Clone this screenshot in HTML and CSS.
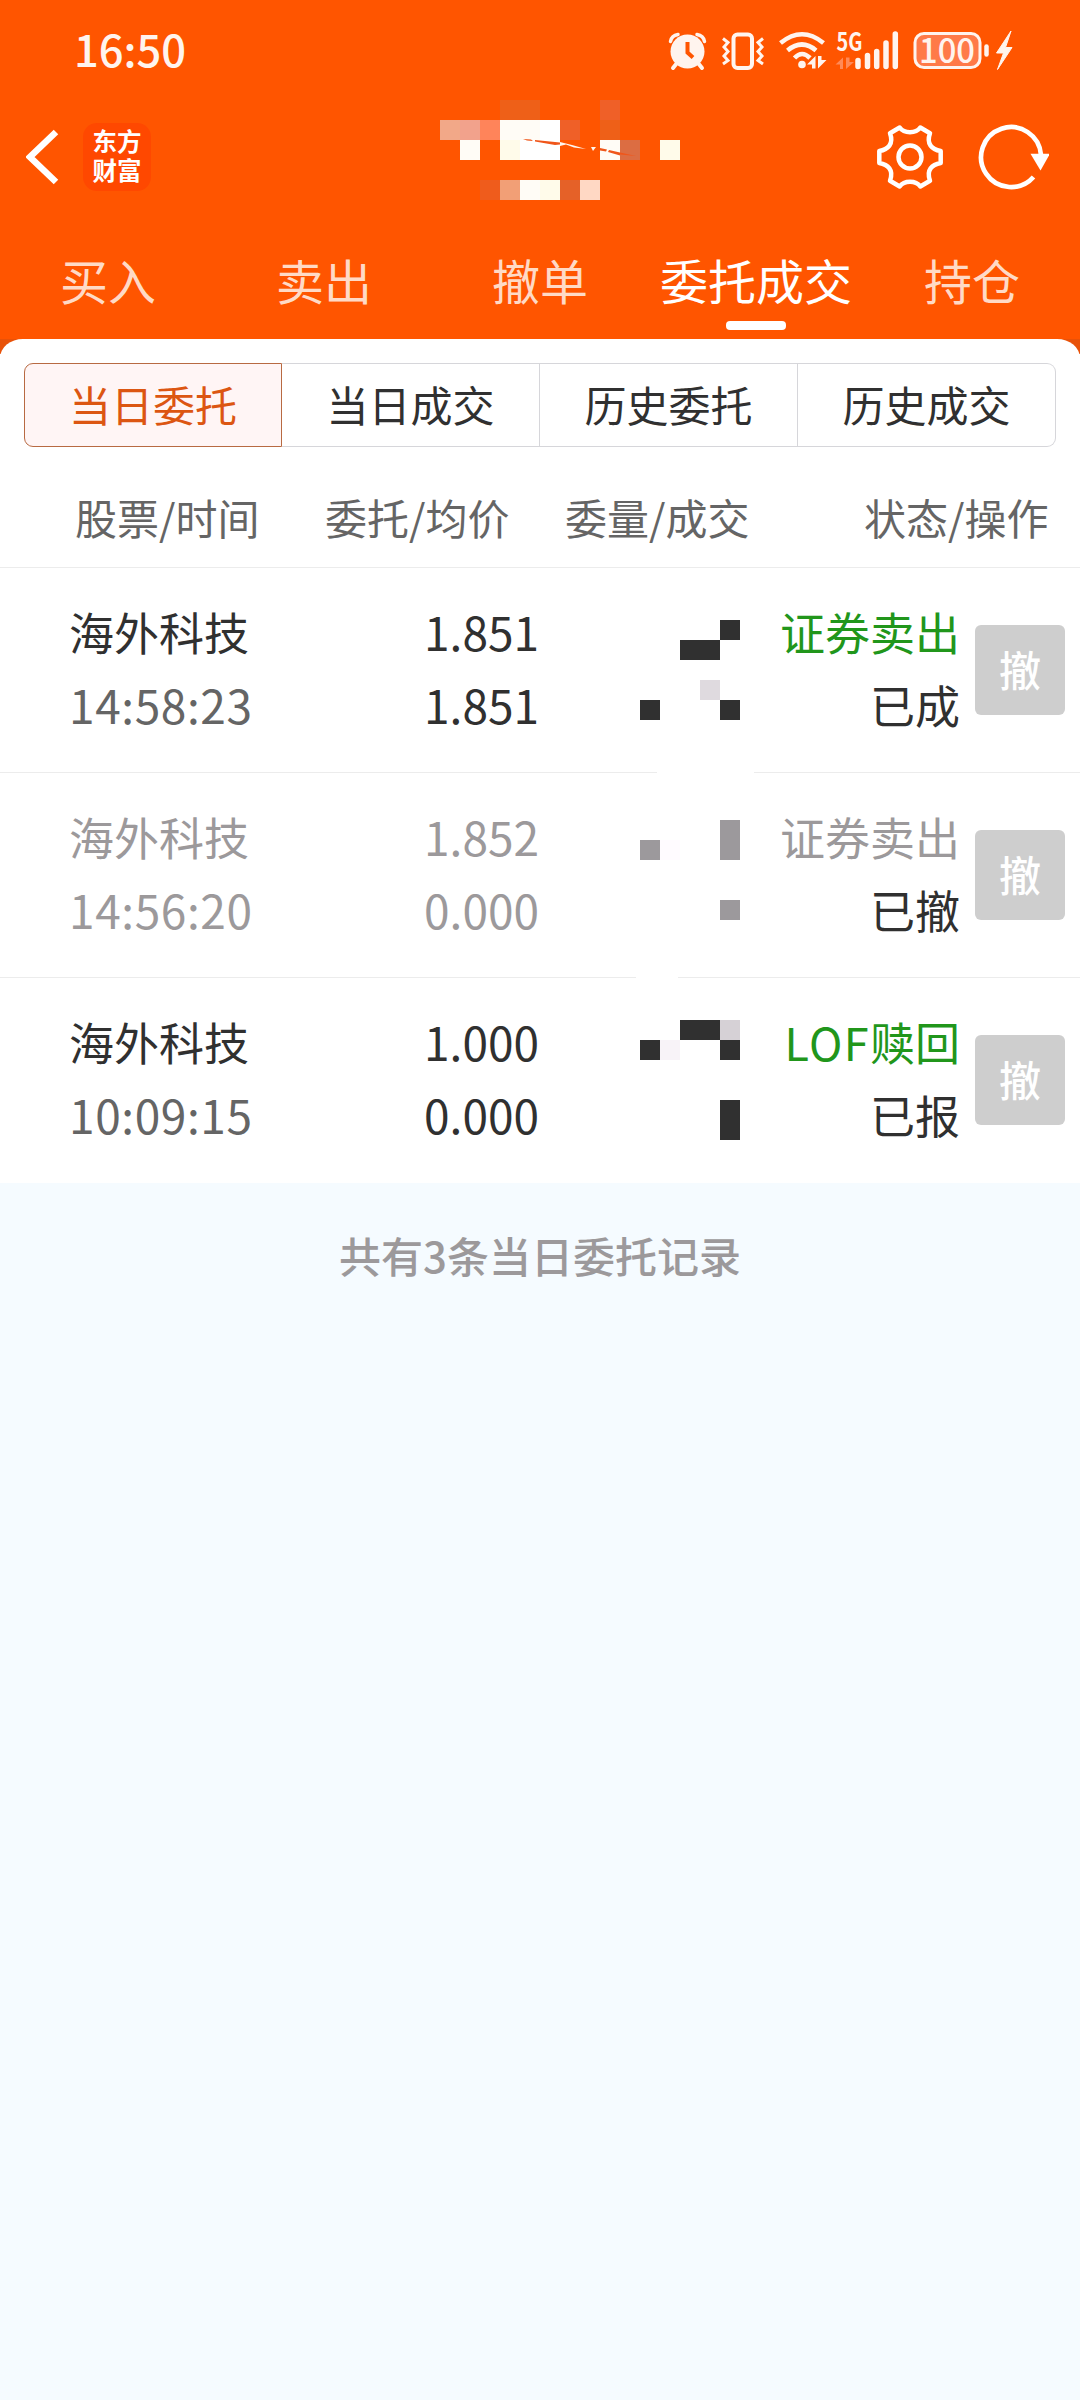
FILE: index.html
```html
<!DOCTYPE html>
<html lang="zh-CN">
<head>
<meta charset="utf-8">
<title>委托成交</title>
<link rel="stylesheet" href="styles.css">
</head>
<body>
<header class="top">
  <div class="status-bar">
    <span class="clock">16:50</span>
    <svg class="status-icons" width="360" height="60" viewBox="660 20 360 60" fill="none" stroke="#fff4ee">
      <!-- alarm -->
      <circle cx="687.500" cy="51.500" r="17" fill="#fff4ee" stroke="none"/>
      <path d="M670.500 41.500q1-6 7.500-7M704.500 41.500q-1-6-7.500-7" stroke-width="3.500" stroke-linecap="round"/>
      <path d="M677 63l-4 5M698 63l4 5" stroke-width="4" stroke-linecap="round"/>
      <path d="M687.500 42v10.500l5.500 5" stroke="#ff5500" stroke-width="4"/>
      <!-- vibrate -->
      <rect x="733.500" y="34.500" width="18.500" height="33.500" rx="4" stroke-width="4"/>
      <path d="M723 38.500l5 4-4 4.500 4 4.500-4 4.500 4 4.500-5 3.500M763 38.500l-5 4 4 4.500-4 4.500 4 4.500-4 4.500 5 3.500" stroke-width="3"/>
      <!-- wifi -->
      <path d="M780.500 43Q802 25.500 823.500 43M787.500 50.500Q802 38.500 816 50.500" stroke-width="4.600"/>
      <path d="M794.500 58Q802 50 810 58" stroke-width="4.600"/>
      <circle cx="802" cy="64.500" r="3.800" fill="#fff4ee" stroke="none"/>
      <path d="M807 64.500l8.500-8.500V68.500h-3.500v-4zM818 56v12.500l8.500-8.500h-5v-4z" fill="#fff4ee" stroke="none"/>
      <!-- mobile signal -->
      <text class="net" x="836.500" y="51" textLength="26" lengthAdjust="spacingAndGlyphs">5G</text>
      <path d="M835.500 64.500l7.500-7V69h-3v-4.500zM846 57.500V69l8-7h-4.500v-4.500z" fill="#ff8a58" stroke="none"/>
      <path d="M858 60.500v6M867.500 55.500v11M876.700 51.500v15M886 43v23.500M895.300 34v32.500" stroke-width="5.500" stroke-linecap="round"/>
      <!-- battery -->
      <rect x="915" y="33.500" width="65" height="34" rx="9" fill="#ff7a48" stroke-width="3"/>
      <path d="M986.500 46.500v8" stroke-width="4.500" stroke-linecap="round"/>
      <text class="level" x="919" y="63" textLength="56" lengthAdjust="spacingAndGlyphs">100</text>
      <path d="M1011 31l-14.500 22h7l-6 16.500 14.500-22h-6.500z" fill="#fff4ee" stroke="#fff4ee" stroke-width="1"/>
    </svg>
  </div>

  <div class="nav-bar">
    <svg class="back" width="34" height="56" viewBox="0 0 34 56" fill="none" stroke="#fff" stroke-width="6.500"><path d="M30 3L4 28 30 53"/></svg>
    <div class="logo"><span>东方</span><span>财富</span></div>
    <svg class="account" width="240" height="100" viewBox="440 100 240 100" shape-rendering="crispEdges">
      <path fill="#ee6018" d="M500 100h40v20h-40zM600 120h20v20h-20z"/>
      <path fill="#ef6028" d="M600 100h20v20h-20zM560 120h20v20h-20z"/>
      <path fill="#f2a888" d="M440 120h20v20h-20z"/>
      <path fill="#f2a28c" d="M460 120h20v20h-20z"/>
      <path fill="#ff845a" d="M480 120h20v20h-20z"/>
      <path fill="#fffcf6" d="M500 120h40v20h-40zM460 140h20v20h-20zM600 140h20v20h-20zM520 180h20v20h-20z"/>
      <path fill="#fff" d="M540 120h20v20h-20zM520 140h40v20h-40z"/>
      <path fill="#fffbea" d="M500 140h20v20h-20zM660 140h20v20h-20zM540 180h20v20h-20z"/>
      <path fill="#dc6d42" d="M620 140h20v20h-20z"/>
      <path fill="#ef5c1c" d="M480 180h20v20h-20z"/>
      <path fill="#f29f76" d="M500 180h20v20h-20z"/>
      <path fill="#e56128" d="M560 180h20v20h-20z"/>
      <path fill="#ffd8c4" d="M580 180h20v20h-20z"/>
      <g shape-rendering="auto">
        <path fill="#f0561a" d="M523 139l8 .5 2 1.500-6-.5zM535 140l25 2.500v2l-5 .5-20-3.500zM609 150l11 2.500v3l-12-3.500zM600 148l7 1.500-1 2-6-1z"/>
        <path fill="#fff6ee" d="M560 142l12 3 14 4-12-1.500-8-3-6 1.500zM591 147h5l-3 4z"/>
        <path fill="#f0561a" d="M620 152.500l16 3.500-16-1.500z"/>
      </g>
    </svg>
    <svg class="gear" width="68" height="68" viewBox="-34 -34 68 68" fill="none" stroke="#fff" stroke-width="4.500" stroke-linejoin="round">
      <path d="M-10.300-29.500Q-7-24.800 0-24.800T10.300-29.500L20-23.800C16-13 22-7.500 30.700-6V6C22 7.500 16 13 20 23.800L10.300 29.500Q7 24.800 0 24.800T-10.300 29.500L-20 23.800C-16 13-22 7.500-30.700 6V-6C-22-7.500-16-13-20-23.800Z"/>
      <circle r="11.500"/>
    </svg>
    <svg class="refresh" width="72" height="68" viewBox="-34 -34 72 68" fill="none" stroke="#fff" stroke-width="4.700">
      <path d="M30-2A30 30 0 1 0 22.500 20"/>
      <path d="M19.500-3.300h19.500L29.500 13.500z" fill="#fff" stroke="none"/>
    </svg>
  </div>

  <nav class="tabs">
    <a class="tab">买入</a>
    <a class="tab">卖出</a>
    <a class="tab">撤单</a>
    <a class="tab active">委托成交</a>
    <a class="tab">持仓</a>
  </nav>
</header>

<div class="sheet-wrap">
<main class="sheet">
  <div class="segments">
    <a class="segment selected">当日委托</a>
    <a class="segment">当日成交</a>
    <a class="segment">历史委托</a>
    <a class="segment">历史成交</a>
  </div>
  <div class="columns">
    <span>股票/时间</span><span>委托/均价</span><span>委量/成交</span><span>状态/操作</span>
  </div>

  <section class="order">
    <div class="stock"><p>海外科技</p><p class="time">14:58:23</p></div>
    <div class="price"><p>1.851</p><p>1.851</p></div>
    <svg class="amount" width="120" height="205" viewBox="636 568 120 205" shape-rendering="crispEdges">
      <path fill="#fff" d="M657 770h97v3h-97z"/>
      <path fill="#303030" d="M720 620h20v20h-20zM680 640h40v20h-40zM640 700h20v20h-20zM720 700h20v20h-20z"/>
      <path fill="#dfdadf" d="M700 680h20v20h-20z"/>
    </svg>
    <div class="state"><p class="sell">证券卖出</p><p>已成</p></div>
    <button class="cancel">撤</button>
  </section>

  <section class="order withdrawn">
    <div class="stock"><p>海外科技</p><p class="time">14:56:20</p></div>
    <div class="price"><p>1.852</p><p>0.000</p></div>
    <svg class="amount" width="120" height="205" viewBox="636 773 120 205" shape-rendering="crispEdges">
      <path fill="#fff" d="M636 975h42v3h-42z"/>
      <path fill="#9c999c" d="M640 840h20v20h-20zM720 820h20v40h-20zM720 900h20v20h-20z"/>
      <path fill="#fffbff" d="M660 840h20v20h-20z"/>
    </svg>
    <div class="state"><p class="sell">证券卖出</p><p class="result">已撤</p></div>
    <button class="cancel">撤</button>
  </section>

  <section class="order">
    <div class="stock"><p>海外科技</p><p class="time">10:09:15</p></div>
    <div class="price"><p>1.000</p><p>0.000</p></div>
    <svg class="amount" width="120" height="205" viewBox="636 978 120 205" shape-rendering="crispEdges">
      <path fill="#303030" d="M680 1020h40v20h-40zM640 1040h20v20h-20zM720 1040h20v20h-20zM720 1100h20v40h-20z"/>
      <path fill="#d6d1d6" d="M720 1020h20v20h-20z"/>
      <path fill="#f8f3f8" d="M660 1040h20v20h-20z"/>
    </svg>
    <div class="state"><p class="sell"><span class="latin">LOF</span>赎回</p><p>已报</p></div>
    <button class="cancel">撤</button>
  </section>
</main>
</div>
<footer class="summary">共有3条当日委托记录</footer>
</body>
</html>
```
FILE: styles.css
```css
* { box-sizing: border-box; }

body {
  margin: 0;
  width: 1080px;
  min-height: 2400px;
  background: #f5fbff;
  color: #303030;
  font-family: "Noto Sans CJK SC", sans-serif;
}

p { margin: 0; }

.top {
  height: 339px;
  background: #ff5500;
  color: #fff;
}

.status-bar {
  display: flex;
  height: 100px;
  padding: 20px 60px 20px 74px;
  justify-content: space-between;
}

.clock {
  font-size: 43.5px;
  font-weight: 500;
  line-height: 57px;
  color: #fff4ee;
}

.net,
.level {
  fill: #fff4ee;
  stroke: none;
  font-weight: 500;
}

.net { font-size: 25px; font-weight: 700; }
.level { font-size: 34px; }

.nav-bar {
  display: flex;
  align-items: center;
  height: 114px;
  padding-left: 26px;
}

.logo {
  display: flex;
  flex-direction: column;
  align-items: center;
  width: 68px;
  height: 68px;
  margin-left: 23px;
  padding-top: 3px;
  border-radius: 14px;
  background: #ff4800;
  font-size: 24.5px;
  font-weight: 700;
  line-height: 29px;
}

.account {
  align-self: flex-start;
  margin-left: 289px;
}

.gear { margin-left: 196px; }
.refresh { margin-left: 33px; }

.tabs {
  display: grid;
  grid-template-columns: repeat(5, 1fr);
  height: 125px;
  padding-top: 30px;
}

.tab {
  display: flex;
  flex-direction: column;
  align-items: center;
  gap: 7px;
  font-size: 48px;
  line-height: 70px;
  color: #ffdac6;
}

.tab.active { color: #fff; }

.tab.active::after {
  content: "";
  width: 60px;
  height: 9px;
  border-radius: 4px;
  background: #fff;
}

.sheet-wrap { background: linear-gradient(#e85209 15px, #fff 15px); }

.sheet {
  padding-top: 24px;
  border-radius: 23px 23px 0 0 / 19px 19px 0 0;
  background: #fff;
}

.segments {
  display: grid;
  grid-template-columns: repeat(4, 1fr);
  height: 84px;
  margin: 0 24px;
}

.segment {
  border: 1px solid #d6d6da;
  border-left-width: 0;
  font-size: 42px;
  line-height: 79px;
  text-align: center;
}

.segment:last-child { border-radius: 0 9px 9px 0; }

.segment.selected {
  border: 1px solid #b86a42;
  border-radius: 9px 0 0 9px;
  background: #fff5f5;
  color: #dc5612;
}

.columns {
  display: grid;
  grid-template-columns: 250px 240px 299px 1fr;
  height: 121px;
  padding: 40px 0 0 75px;
  border-bottom: 1px solid #ececec;
  font-size: 42px;
  line-height: 60px;
  color: #656565;
}

.order {
  display: grid;
  grid-template-columns: 200px 270px 97px 120px 204px 106px;
  height: 205px;
  padding-left: 69px;
  font-size: 45px;
  line-height: 73px;
  background: linear-gradient(#ececec, #ececec) 0 100% / 100% 1px no-repeat;
}

.order:last-child { background: none; }

.stock,
.price,
.state { padding-top: 27px; white-space: nowrap; }

.time,
.price { font-size: 46px; }

.time { color: #656565; letter-spacing: 0.6px; }
.price { text-align: right; }
.amount { grid-column: 4; }
.state { text-align: right; }
.sell { color: #21961b; }
.latin { letter-spacing: 1.4px; }

.withdrawn,
.withdrawn .time,
.withdrawn .sell { color: #9c999b; }
.withdrawn .result { color: #303030; }

.cancel {
  width: 90px;
  height: 90px;
  margin: 57px 0 0 15px;
  padding: 0;
  border: 0;
  border-radius: 6px;
  background: #cecece;
  color: #fff;
  font: 500 42px/88px "Noto Sans CJK SC", sans-serif;
}

.cancel { padding-bottom: 2px; }

.summary {
  padding-top: 42px;
  font-size: 42px;
  font-weight: 500;
  line-height: 60px;
  text-align: center;
  color: #9c999b;
}
```
